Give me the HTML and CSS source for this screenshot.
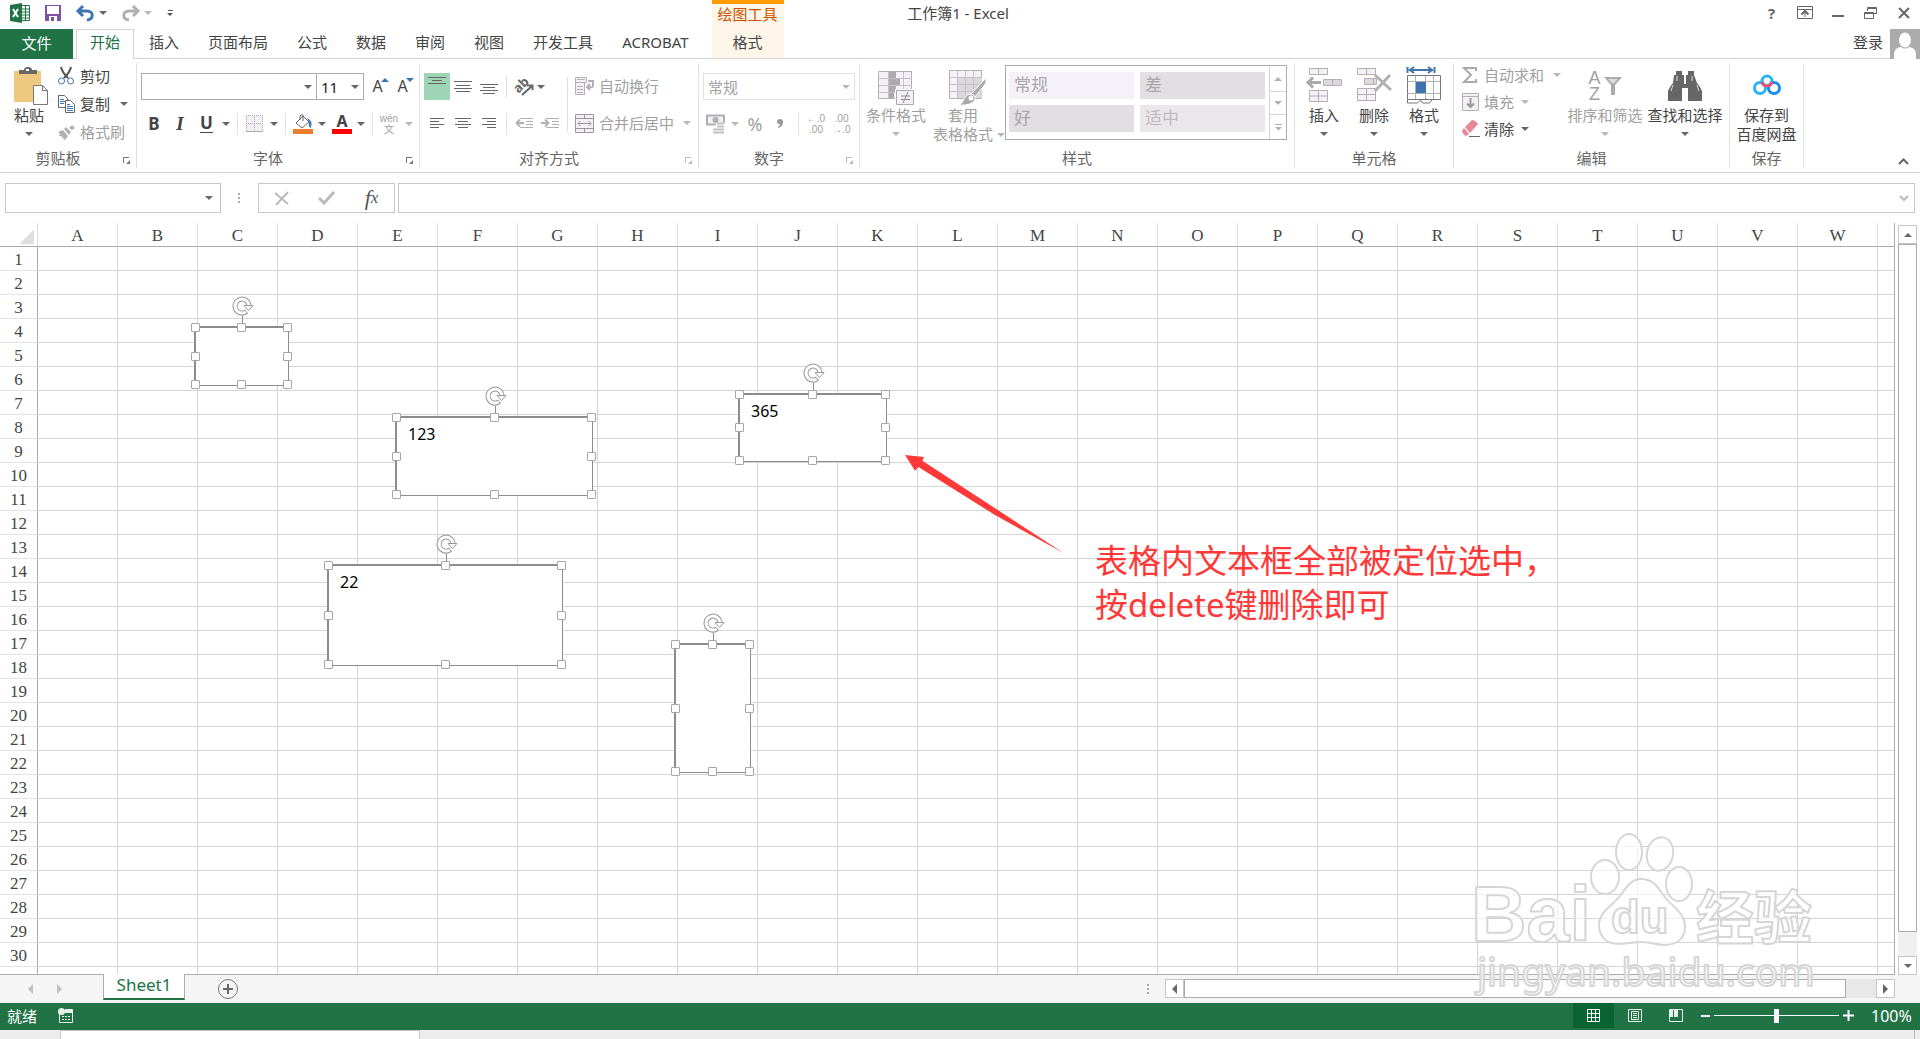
FILE: index.html
```html
<!DOCTYPE html>
<html lang="zh-CN">
<head>
  <meta charset="UTF-8" />
  <meta name="viewport" content="width=device-width, initial-scale=1.0" />
  <title>工作簿1 - Excel</title>
  <link rel="stylesheet" href="styles.css">
</head>
<body>
  <header class="header">
    <div class="quick">
      <svg class="logo" width="20" height="20" viewBox="0 0 20 20"><path d="M11 2.5h8.5v15H11" fill="#fff" stroke="#217346"/><path d="M12 6h7M12 9h7M12 12h7M12 15h7M15.5 3v14" stroke="#217346"/><path d="M0 2 12 0v20L0 18z" fill="#217346"/><path d="m3 6 5 8M8 6l-5 8" stroke="#fff" stroke-width="2"/></svg>
      <button class="qbtn" aria-label="保存"><svg width="16" height="16" viewBox="0 0 16 16"><path d="M0 0h16v16H0z" fill="#8150a0"/><path d="M2 1h12v8H2zM4 11h8v5H4z" fill="#fff"/><path d="M6 12h3v4H6z" fill="#8150a0"/></svg></button>
      <button class="qbtn undo" aria-label="撤消"><svg width="19" height="16" viewBox="0 0 19 16"><path d="M7 1 2 6l5 5M2 6h9c7 0 7 8 0 9" fill="none" stroke="#3e74b0" stroke-width="3"/></svg><i class="caret"></i></button>
      <button class="qbtn redo" aria-label="恢复"><svg width="19" height="16" viewBox="0 0 19 16"><path d="m12 1 5 5-5 5M17 6H8c-7 0-7 8 0 9" fill="none" stroke="#b1b1b1" stroke-width="3"/></svg><i class="caret off"></i></button>
      <button class="qbtn custom" aria-label="自定义快速访问工具栏"><svg width="7" height="7" viewBox="0 0 7 7"><path d="M1 0h5v1H1zM0 3h6L3 6z" fill="#555"/></svg></button>
    </div>
    <h1 class="doc-title">工作簿1 - Excel</h1>
    <div class="window-btns">
      <button aria-label="帮助"><b>?</b></button>
      <button aria-label="功能区显示选项"><svg width="16" height="14" viewBox="0 0 16 14" fill="none" stroke="#666"><path d="M.5.5h15v12H.5zM0 3.500h16M8 11V5"/><path d="M4.500 8.500 8 5l3.500 3.500" stroke-width="2"/></svg></button>
      <button aria-label="最小化"><svg width="12" height="14" viewBox="0 0 12 14"><path d="M0 9h12v2H0z" fill="#666"/></svg></button>
      <button aria-label="还原"><svg width="13" height="13" viewBox="0 0 13 13" fill="none" stroke="#666"><path d="M3.500 4V.5h9v6h-3M3.500 1.500h9"/><path d="M.5 5.500h9v6h-9zM.5 6.500h9"/></svg></button>
      <button aria-label="关闭"><svg width="12" height="12" viewBox="0 0 12 12"><path d="m1 1 10 10M11 1 1 11" stroke="#666" stroke-width="2"/></svg></button>
    </div>

    <nav class="tabs">
      <a class="tab file" href="#">文件</a>
      <a class="tab active" href="#">开始</a>
      <a class="tab" href="#">插入</a>
      <a class="tab" href="#">页面布局</a>
      <a class="tab" href="#">公式</a>
      <a class="tab" href="#">数据</a>
      <a class="tab" href="#">审阅</a>
      <a class="tab" href="#">视图</a>
      <a class="tab" href="#">开发工具</a>
      <a class="tab" href="#">ACROBAT</a>
    </nav>
    <div class="context">
      <span>绘图工具</span>
      <a href="#">格式</a>
    </div>
    <div class="account">
      <a href="#">登录</a>
      <svg width="30" height="30" viewBox="0 0 30 30"><path d="M0 0h30v30H0z" fill="#ababab"/><ellipse cx="15" cy="11" rx="6" ry="7.500" fill="#fff"/><path d="M4 30v-5q0-6 7-7 4 3 8 0 7 1 7 7v5z" fill="#fff"/></svg>
    </div>
  </header>

  <main class="ribbon">
    <!-- 剪贴板 -->
    <section class="group g-clip">
      <div class="body">
        <button class="big paste">
          <span class="pic"><svg width="36" height="38" viewBox="0 0 36 38"><path d="M1 4h27v31H1z" fill="#edc87e"/><path d="M6 7V3h5q0-3 4-3t4 3h5v4z" fill="#666"/><path d="M13 2h3v2h-3z" fill="#fff"/><path d="M20.500 18.500h9l5 5v14h-14z" fill="#fff" stroke="#777"/><path d="M29.500 18.500v5h5" fill="none" stroke="#777"/></svg></span>
          粘贴<i class="caret"></i>
        </button>
        <div class="stack">
          <button class="small"><span class="ico"><svg width="16" height="18" viewBox="0 0 16 18" fill="none"><path d="M3 0c1 5 4 8 7 11M13 0c-1 5-4 8-7 11" stroke="#555" stroke-width="2"/><circle cx="3.500" cy="14" r="3" stroke="#3e74b0"/><circle cx="12.500" cy="14" r="3" stroke="#3e74b0"/></svg></span>剪切</button>
          <button class="small"><span class="ico"><svg width="17" height="18" viewBox="0 0 17 18" fill="#fff" stroke="#666"><path d="M.5.500h6l3 3v9h-9z"/><path d="M2 4.500h4M2 6.500h5M2 8.500h4" stroke="#3e74b0"/><path d="M7.500 5.500h5l4 4v8h-9z"/><path d="M9 9.500h3M9 11.500h6M9 13.500h6M9 15.500h6" stroke="#3e74b0"/></svg></span>复制<i class="caret"></i></button>
          <button class="small" disabled><span class="ico"><svg width="17" height="15" viewBox="0 0 17 15" fill="#b1b1b1"><path d="m0 7 5-2 5 6-3 4-2-1 1-2-3 1 1-2-3 0 1-2zM6 4l2-2 5 5-2 3zM11 3l3-3 3 3-3 2z"/></svg></span>格式刷</button>
        </div>
      </div>
      <h2 class="label">剪贴板<button class="launch" aria-label="剪贴板设置"><svg width="7" height="7" viewBox="0 0 7 7"><path d="M0 6V0h6v1H1v5zM3 3l3 3M7 3v4H3z" fill="#777"/></svg></button></h2>
    </section>

    <!-- 字体 -->
    <section class="group g-font">
      <div class="body lines">
        <div class="line">
          <span class="combo font-name"><select aria-label="字体"><option></option></select><i class="caret"></i></span>
          <span class="combo font-size"><select aria-label="字号"><option>11</option></select><i class="caret"></i></span>
          <button class="tool size-btn" aria-label="增大字号"><span>A</span><i class="caret up blue"></i></button>
          <button class="tool size-btn" aria-label="减小字号"><span>A</span><i class="caret blue"></i></button>
        </div>
        <div class="line font-tools">
          <button class="tool"><b>B</b></button>
          <button class="tool"><b class="it">I</b></button>
          <button class="tool"><b class="un">U</b></button>
          <button class="tool" aria-label="下划线选项"><i class="caret"></i></button>
          <i class="sep"></i>
          <button class="tool" aria-label="边框" disabled><svg width="17" height="17" viewBox="0 0 17 17"><path d="M0 0h17v16H0z" fill="#f4eff6"/><path d="M0 .5h17M0 8.500h17M.5 0v16M8.500 0v16M16.500 0v16" stroke="#aaa" stroke-dasharray="1 1"/><path d="M0 16h17v1H0z" fill="#aaa"/></svg></button>
          <button class="tool" aria-label="边框选项"><i class="caret"></i></button>
          <i class="sep"></i>
          <button class="tool" aria-label="填充颜色"><svg width="20" height="20" viewBox="0 0 20 20"><path d="m3 9 7-7 6 6-7 6z" fill="#fff" stroke="#666"/><path d="M7 6V2q1-2 3-1v6" fill="none" stroke="#666"/><path d="M14 4q6 2 4 10-3-1-2-6z" fill="#3e74b0"/><path d="M0 15h20v5H0z" fill="#ed7d31"/></svg></button>
          <button class="tool" aria-label="填充颜色选项"><i class="caret"></i></button>
          <button class="tool" aria-label="字体颜色"><b class="font-color">A</b></button>
          <button class="tool" aria-label="字体颜色选项"><i class="caret"></i></button>
          <i class="sep"></i>
          <button class="tool wen" disabled><span>wén</span><span>文</span></button>
          <button class="tool" aria-label="拼音选项" disabled><i class="caret"></i></button>
        </div>
      </div>
      <h2 class="label">字体<button class="launch" aria-label="字体设置"><svg width="7" height="7" viewBox="0 0 7 7"><path d="M0 6V0h6v1H1v5zM3 3l3 3M7 3v4H3z" fill="#777"/></svg></button></h2>
    </section>

    <!-- 对齐方式 -->
    <section class="group g-align">
      <div class="body lines cols">
        <div class="align-grid">
          <button class="tool on" aria-label="顶端对齐"><svg width="18" height="17" viewBox="0 0 18 17"><path d="M0 .5h18M4 3.500h10M0 6.500h18" class="ln"/></svg></button>
          <button class="tool" aria-label="垂直居中"><svg width="18" height="12" viewBox="0 0 18 12"><path d="M0 .5h18M2 4.500h14M0 7.500h18M2 10.500h14" class="ln"/></svg></button>
          <button class="tool low" aria-label="底端对齐"><svg width="18" height="11" viewBox="0 0 18 11"><path d="M0 .5h18M3 3.500h12M0 6.500h18M3 9.500h12" class="ln"/></svg></button>
          <i class="sep"></i>
          <button class="tool" aria-label="方向"><svg width="19" height="18" viewBox="0 0 19 18"><text x="0" y="13" class="ab" transform="rotate(-45 5 10)">ab</text><path d="m7 17 10-9M12 7.500h5.500V12" fill="none" stroke="#666" stroke-width="2"/></svg></button>
          <button class="tool start" aria-label="方向选项"><i class="caret"></i></button>
          <button class="tool" aria-label="左对齐"><svg width="14" height="11" viewBox="0 0 14 11"><path d="M0 .5h14M0 3.500h9M0 6.500h14M0 9.500h9" class="ln"/></svg></button>
          <button class="tool" aria-label="居中"><svg width="16" height="11" viewBox="0 0 16 11"><path d="M0 .5h16M3 3.500h10M0 6.500h16M3 9.500h10" class="ln"/></svg></button>
          <button class="tool" aria-label="右对齐"><svg width="14" height="11" viewBox="0 0 14 11"><path d="M0 .5h14M5 3.500h9M0 6.500h14M5 9.500h9" class="ln"/></svg></button>
          <i class="sep"></i>
          <button class="tool" aria-label="减少缩进量" disabled><svg width="18" height="11" viewBox="0 0 18 11"><path d="M5 .5h13M11 3.500h7M11 6.500h7M5 9.500h13" stroke="#b1b1b1"/><path d="M1 5h8M5 1.500 1.500 5 5 8.500" fill="none" stroke="#b1b1b1" stroke-width="2"/></svg></button>
          <button class="tool" aria-label="增加缩进量" disabled><svg width="18" height="11" viewBox="0 0 18 11"><path d="M5 .5h13M11 3.500h7M11 6.500h7M5 9.500h13" stroke="#b1b1b1"/><path d="M0 5h8M4 1.500 7.500 5 4 8.500" fill="none" stroke="#b1b1b1" stroke-width="2"/></svg></button>
        </div>
        <i class="sep tall"></i>
        <div class="wrap-col">
          <button class="small" disabled><span class="ico"><svg width="19" height="18" viewBox="0 0 19 18" fill="#f4eff6" stroke="#b1b1b1"><path d="M.5.500h11v5H.5zM.5 5.500h9v12h-9zM2 2.500h8M2 9.500h6M2 12.500h6M2 15.500h6"/><path d="M13 4h5v5q0 2-6 1M15 7l-3 3 3 3" fill="none" stroke-width="2"/></svg></span>自动换行</button>
          <button class="small" disabled><span class="ico"><svg width="19" height="19" viewBox="0 0 19 19" fill="#f4eff6" stroke="#999"><path d="M.5.500h18v18H.5zM.5 4.500h18M.5 14.500h18M9.500 0v4.500M9.500 14.500v4"/><path d="M3 9.500h13M5.500 7 3 9.500 5.500 12M13.500 7 16 9.500 13.500 12" fill="none"/></svg></span>合并后居中<i class="caret"></i></button>
        </div>
      </div>
      <h2 class="label">对齐方式<button class="launch off" aria-label="对齐设置"><svg width="7" height="7" viewBox="0 0 7 7"><path d="M0 6V0h6v1H1v5zM3 3l3 3M7 3v4H3z" fill="#bbb"/></svg></button></h2>
    </section>

    <!-- 数字 -->
    <section class="group g-num">
      <div class="body lines">
        <div class="line">
          <span class="combo num-format"><select aria-label="数字格式" disabled><option>常规</option></select><i class="caret off"></i></span>
        </div>
        <div class="line num-tools">
          <button class="tool" aria-label="会计数字格式" disabled><svg width="20" height="20" viewBox="0 0 20 20"><path d="M1 1.500h17v9H1z" fill="#f4eff6" stroke="#b1b1b1" stroke-width="2"/><circle cx="9.500" cy="6" r="3" fill="#b1b1b1"/><path d="M10 9h9v10H6v-5h4z" fill="#fff"/><path d="M11 9.500h7M11 12.500h7M11 15.500h7M7 15.500h7M7 18.500h7M11 18.500h7" stroke="#c4bfc6" stroke-width="2"/></svg></button>
          <button class="tool" aria-label="会计格式选项" disabled><i class="caret"></i></button>
          <button class="tool pct" disabled>%</button>
          <button class="tool comma" aria-label="千位分隔样式" disabled><svg width="6" height="9" viewBox="0 0 6 9"><path d="M3 0q3 0 3 3 0 5-5 6V8q2-1 2-3-3 0-3-2.500T3 0z" fill="#999"/></svg></button>
          <i class="sep"></i>
          <button class="tool dec" disabled><span>←.0</span><span>.00</span></button>
          <button class="tool dec" disabled><span>.00</span><span>→.0</span></button>
        </div>
      </div>
      <h2 class="label">数字<button class="launch off" aria-label="数字设置"><svg width="7" height="7" viewBox="0 0 7 7"><path d="M0 6V0h6v1H1v5zM3 3l3 3M7 3v4H3z" fill="#bbb"/></svg></button></h2>
    </section>

    <!-- 样式 -->
    <section class="group g-style">
      <div class="body">
        <button class="big cond" disabled>
          <span class="pic"><svg width="38" height="36" viewBox="0 0 38 36"><path d="M1.500 1.500h33v27h-33z" fill="#f6f1f8" stroke="#b1b1b1"/><path d="M1 8.500h34M1 15.500h34M1 22.500h34M11.500 1v28M18.500 1v28M26.500 1v28" stroke="#c4c0c6"/><path d="M12 1h7v7h-7zM12 9h11v6H12zM12 16h7v6h-7zM12 23h5v6h-5z" fill="#ababab"/><path d="M18 19h20v17H18z" fill="#fff"/><path d="M19.500 20.500h17v14h-17z" fill="#f6f1f8" stroke="#aaa"/><path d="M24 26h9M24 29.500h9M31 22l-5 11" stroke="#888"/></svg></span>
          条件格式<i class="caret"></i>
        </button>
        <button class="big table-fmt" disabled>
          <span class="pic"><svg width="38" height="36" viewBox="0 0 38 36"><path d="M1.500.500h32v28h-32z" fill="#f6f1f8" stroke="#b1b1b1"/><path d="M10 8h24v20H10z" fill="#dcd8dc"/><path d="M1 7.500h33M1 14.500h33M1 21.500h33M9.500 0v28M17.500 0v28M25.500 0v28" stroke="#c4c0c6"/><path d="M38 8v5L27 27l-4-3z" fill="#aaa" stroke="#fff"/><path d="M22 24q6 0 5 6-4 6-16 5 4-2 5-6 2-5 6-5z" fill="#aaa" stroke="#fff"/><circle cx="23" cy="28" r="2.500" fill="#fff"/></svg></span>
          套用<br>表格格式<i class="caret"></i>
        </button>
        <div class="gallery">
          <div class="swatches">
            <button class="sw normal">常规</button>
            <button class="sw bad">差</button>
            <button class="sw good">好</button>
            <button class="sw mid">适中</button>
          </div>
          <div class="gal-scroll">
            <button aria-label="上一行"><i class="caret up"></i></button>
            <button aria-label="下一行"><i class="caret"></i></button>
            <button aria-label="其他"><svg width="7" height="7" viewBox="0 0 7 7"><path d="M0 0h7v1H0zM0 3h7L3.500 6.500z" fill="#b1b1b1"/></svg></button>
          </div>
        </div>
      </div>
      <h2 class="label">样式</h2>
    </section>

    <!-- 单元格 -->
    <section class="group g-cells">
      <div class="body">
        <button class="big w50"><span class="pic"><svg width="36" height="36" viewBox="0 0 36 36" fill="#f6f1f8" stroke="#b1b1b1"><path d="M3.500 1.500h18v6h-18zM12.500 1.500v6M3.500 23.500h18v11h-18zM3.500 29h18M12.500 23.500v11"/><path d="M17.500 12.500h18v6h-18zM26.500 12.500v6" fill="#dfd8df"/><path d="M1 15.500h14M7 10.500l-5 5 5 5" fill="none" stroke="#aaa" stroke-width="3"/></svg></span>插入<i class="caret"></i></button>
        <button class="big w50"><span class="pic"><svg width="36" height="36" viewBox="0 0 36 36" fill="#f6f1f8" stroke="#b1b1b1"><path d="M1.500 1.500h18v6h-18zM10.500 1.500v6M1.500 21.500h18v12h-18zM1.500 27.500h18M10.500 21.500v12"/><path d="M8.500 11.500h12v6h-12zM17.500 11.500v6" fill="#dfd8df"/><path d="m19 8 16 15M34 8 19 24" fill="none" stroke="#b1b1b1" stroke-width="3"/></svg></span>删除<i class="caret"></i></button>
        <button class="big w50"><span class="pic"><svg width="36" height="38" viewBox="0 0 36 38" fill="none"><path d="M1.500 0v6M28.500 0v6M3 3h24M8 0 4 3l4 3M22 0l4 3-4 3" stroke="#3e74b0" stroke-width="2"/><path d="M1.500 8.500h33v24h-33z" fill="#fff" stroke="#777"/><path d="M1 14.500h33M1 26.500h33M9.500 9v23M19.500 9v23M27.500 9v23" stroke="#b1b1b1"/><path d="M10 15h10v11H10z" fill="#3e74b0"/><path d="M1.500 32v4h10l3-3 2 3h7l3-4" stroke="#777"/></svg></span>格式<i class="caret"></i></button>
      </div>
      <h2 class="label">单元格</h2>
    </section>

    <!-- 编辑 -->
    <section class="group g-edit">
      <div class="body">
        <div class="stack edit-stack">
          <button class="small" disabled><span class="ico"><svg width="16" height="16" viewBox="0 0 16 16"><path d="M14 4V1H2l7 7-7 7h12v-3" fill="none" stroke="#aaa" stroke-width="2"/></svg></span>自动求和<i class="caret far"></i></button>
          <button class="small" disabled><span class="ico"><svg width="17" height="18" viewBox="0 0 17 18"><path d="M.5.500h16v17H.5zM.5 3.500h16" fill="#f4eff6" stroke="#b1b1b1"/><path d="M8.500 5v9M5 10.500l3.500 3.500 3.500-3.500" fill="none" stroke="#999" stroke-width="2"/></svg></span>填充<i class="caret"></i></button>
          <button class="small"><span class="ico"><svg width="18" height="18" viewBox="0 0 18 18"><path d="M10 0q3 0 6 4L8 13 3 7z" fill="#e6879a"/><path d="m2 8 5 6-3 2q-3-1-4-5z" fill="#e6879a"/><path d="M7 16.500h11" stroke="#666"/></svg></span>清除<i class="caret"></i></button>
        </div>
        <button class="big w80" disabled><span class="pic"><span class="az"><span>A</span><span>Z</span></span><svg width="18" height="18" viewBox="0 0 18 18"><path d="M0 0h18l-7 8v10H7V8z" fill="#aaa"/><path d="M4 2h10L9 7z" fill="#ddd"/></svg></span>排序和筛选<i class="caret"></i></button>
        <button class="big w80"><span class="pic"><svg width="34" height="32" viewBox="0 0 34 32" fill="#666"><path d="M8 1h6v4h2v9h2V5h2V1h6v4l3 8 3 4 2 4v10H20V18h-6v13H0V21l2-4 3-4 1-8h2z"/><path d="M9 6v5M24 6v5M5 15l-2 6M29 15l2 6" stroke="#ddd"/></svg></span>查找和选择<i class="caret"></i></button>
      </div>
      <h2 class="label">编辑</h2>
    </section>

    <!-- 保存 -->
    <section class="group g-save">
      <div class="body">
        <button class="big w73"><span class="pic"><svg width="28" height="22" viewBox="0 0 28 22" fill="none" stroke-width="3"><circle cx="14" cy="7" r="5" stroke="#27b4f5"/><circle cx="7" cy="14" r="5.500" stroke="#27b4f5"/><circle cx="21" cy="14" r="5.500" stroke="#168cf0"/><path d="M9 8q1 4 5 4t5-4" stroke="#f4506a"/></svg></span>保存到<br>百度网盘</button>
      </div>
      <h2 class="label">保存</h2>
    </section>
    <button class="collapse" aria-label="折叠功能区"><svg width="11" height="7" viewBox="0 0 11 7"><path d="m1 6 4.500-4.500L10 6" fill="none" stroke="#666" stroke-width="2"/></svg></button>
  </main>

  <div class="formula-bar">
    <span class="combo name-box"><input type="text" aria-label="名称框"><i class="caret"></i></span>
    <i class="dots"></i>
    <div class="fx-btns">
      <button aria-label="取消"><svg width="16" height="13" viewBox="0 0 16 13"><path d="m1 1 13 11M14 0 2 13" stroke="#bbb" stroke-width="2"/></svg></button>
      <button aria-label="输入"><svg width="17" height="14" viewBox="0 0 17 14"><path d="m1 7 5 5L16 1" fill="none" stroke="#bbb" stroke-width="3"/></svg></button>
      <button class="fx" aria-label="插入函数">f<sub>x</sub></button>
    </div>
    <div class="formula"><input type="text" aria-label="编辑栏"><svg width="10" height="7" viewBox="0 0 10 7"><path d="m1 1 4 4 4-4" fill="none" stroke="#bbb" stroke-width="2"/></svg></div>
  </div>

  <div class="work">
    <div class="sheet" id="sheet">
      <table class="grid" id="grid"></table>
      <svg class="arrow" width="160" height="100" viewBox="0 0 160 100"><path d="m0 0 19 2-1.600 3.700L158.500 98 90 60 13.400 12 10 15.700z" fill="#ff3838"/></svg>
      <p class="note">表格内文本框全部被定位选中，<br>按delete键删除即可</p>
    </div>
    <div class="vscroll">
      <button aria-label="向上滚动"><i class="caret up"></i></button>
      <div class="thumb"></div>
      <button aria-label="向下滚动"><i class="caret"></i></button>
    </div>
  </div>

  <div class="sheet-bar">
    <button class="nav" aria-label="上一个工作表"><svg width="6" height="10" viewBox="0 0 6 10"><path d="M5 0v10L0 5z" fill="#c0c0c0"/></svg></button>
    <button class="nav" aria-label="下一个工作表"><svg width="6" height="10" viewBox="0 0 6 10"><path d="M0 0v10l5-5z" fill="#c0c0c0"/></svg></button>
    <a class="sheet-tab" href="#">Sheet1</a>
    <button class="add" aria-label="新工作表"><svg width="20" height="20" viewBox="0 0 20 20"><circle cx="10" cy="10" r="9.500" fill="none" stroke="#777"/><path d="M10 5v10M5 10h10" stroke="#666" stroke-width="2"/></svg></button>
    <i class="dots"></i>
    <div class="hscroll">
      <button aria-label="向左滚动"><svg width="6" height="10" viewBox="0 0 6 10"><path d="M5 0v10L0 5z" fill="#666"/></svg></button>
      <div class="thumb"></div>
      <button aria-label="向右滚动"><svg width="6" height="10" viewBox="0 0 6 10"><path d="M0 0v10l5-5z" fill="#666"/></svg></button>
    </div>
  </div>

  <footer class="status">
    <span>就绪</span>
    <svg class="macro" width="15" height="15" viewBox="0 0 15 15"><path d="M1.500 5.500v9h13v-13H7" fill="none" stroke="#e6f2ea"/><path d="M7 1h7v4H7z" fill="#e6f2ea"/><circle cx="3.500" cy="3.500" r="3.500" fill="#e6f2ea"/><path d="M4 8.500h9M4 11.500h9" stroke="#e6f2ea" stroke-dasharray="2 1"/></svg>
    <div class="views">
      <button class="on" aria-label="普通"><svg width="13" height="13" viewBox="0 0 13 13"><path d="M.5.500h12v12H.5zM.5 4.500h12M.5 8.500h12M4.500 0v13M8.500 0v13" fill="none" stroke="#fff"/></svg></button>
      <button aria-label="页面布局"><svg width="14" height="13" viewBox="0 0 14 13"><path d="M.5.500h13v12H.5zM3.500 2.500h7v8h-7zM5 4.500h4M5 6.500h4M5 8.500h4" fill="none" stroke="#e6f2ea"/></svg></button>
      <button aria-label="分页预览"><svg width="14" height="13" viewBox="0 0 14 13"><path d="M.5.500h13v12H.5z" fill="none" stroke="#e6f2ea"/><path d="M1 1h3v7H1zM5 1h4v7H5z" fill="#e6f2ea"/></svg></button>
    </div>
    <button class="zoom-btn" aria-label="缩小"><svg width="9" height="11" viewBox="0 0 9 11"><path d="M0 5h9v2H0z" fill="#fff"/></svg></button>
    <input class="zoom" type="range" min="0" max="200" value="100" aria-label="缩放">
    <button class="zoom-btn plus" aria-label="放大"><svg width="11" height="11" viewBox="0 0 11 11"><path d="M0 4.500h11v2H0zM4.500 0h2v11h-2z" fill="#fff"/></svg></button>
    <span class="percent">100%</span>
  </footer>
  <div class="taskbar"><div class="search"></div><i class="peek"></i></div>

  <svg class="watermark" width="360" height="174" viewBox="0 0 360 174">
    <g class="wm-shape">
      <text x="6" y="111" class="wm-bai">Bai</text>
      <ellipse cx="140" cy="47" rx="14" ry="17"/>
      <ellipse cx="164" cy="22" rx="13" ry="18"/>
      <ellipse cx="195" cy="24" rx="13" ry="17" transform="rotate(12 195 24)"/>
      <ellipse cx="214" cy="54" rx="13" ry="17"/>
      <path d="M176 49c12 0 17 8 23 17 7 10 21 16 21 31 0 11-8 18-20 18-9 0-15-3-24-3s-14 2-23 2c-12 0-19-8-19-19 0-13 14-20 21-29 6-8 11-17 21-17z"/>
      <text x="146" y="103" class="wm-du">du</text>
      <text x="231" y="109" class="wm-jy">经验</text>
      <text x="12" y="156" class="wm-url">jingyan.baidu.com</text>
    </g>
  </svg>

  <script src="script.js"></script>
</body>
</html>
```
FILE: styles.css
```css
* {
  box-sizing: border-box;
}

body {
  margin: 0;
  min-height: 100vh;
  display: flex;
  flex-direction: column;
  position: relative;
  overflow: hidden;
  background: #fff;
  color: #444;
  font: 15px/20px "Noto Sans", "Noto Sans CJK SC", sans-serif;
}

button, input, select, textarea {
  font: inherit;
  color: inherit;
  background: none;
  border: 0;
  padding: 0;
  margin: 0;
  border-radius: 0;
  outline: 0;
}

a {
  color: inherit;
  text-decoration: none;
}

svg {
  display: block;
  flex: none;
  overflow: visible;
}

button:disabled {
  color: #a0a0a0;
}

.caret {
  flex: none;
  width: 0;
  height: 0;
  border: solid transparent;
  border-width: 4px 4px 0;
  border-top-color: #666;
}

.caret.up {
  border-width: 0 4px 4px;
  border-bottom-color: #666;
}

.caret.off,
button:disabled .caret {
  border-top-color: #b8b8b8;
}

/* title bar and tabs */
.header {
  display: grid;
  grid-template-columns: auto auto 1fr;
  grid-template-rows: 29px 30px;
  border-bottom: 1px solid #d4d4d4;
  height: 59px;
}

.quick {
  grid-area: 1 / 1;
  display: flex;
  align-items: center;
  padding: 0 0 3px 10px;
}

.qbtn {
  display: flex;
  align-items: center;
  gap: 4px;
  margin-left: 15px;
}

.qbtn.redo {
  margin-left: 14px;
}

.doc-title {
  grid-area: 1 / 1 / 2 / -1;
  margin: 0;
  padding-right: 4px;
  font-size: 15px;
  font-weight: normal;
  line-height: 26px;
  text-align: center;
  pointer-events: none;
}

.window-btns {
  grid-area: 1 / 3;
  justify-self: end;
  display: flex;
}

.window-btns button {
  width: 33px;
  height: 26px;
  display: flex;
  align-items: center;
  justify-content: center;
  color: #666;
}

.tabs {
  grid-area: 2 / 1;
  display: flex;
  gap: 1px;
}

.tab {
  padding: 0 14px;
  line-height: 26px;
}

.tab.file {
  width: 73px;
  margin-right: 2px;
  background: #217346;
  color: #fff;
  line-height: 28px;
  text-align: center;
}

.tab.active {
  padding: 0 13px;
  height: 30px;
  border: 1px solid #d4d4d4;
  border-bottom: 0;
  background: #fff;
  color: #217346;
  line-height: 24px;
}

.context {
  grid-area: 1 / 2 / 3 / 3;
  display: flex;
  flex-direction: column;
  width: 72px;
  height: 58px;
  margin-left: 9px;
  border-top: 4px solid #ff9c00;
  background: #fff6ea;
  text-align: center;
}

.context span {
  color: #cc5200;
  line-height: 20px;
}

.context a {
  margin-top: 5px;
  line-height: 26px;
}

.account {
  grid-area: 2 / 3;
  justify-self: end;
  display: flex;
  gap: 7px;
  line-height: 26px;
}

/* ribbon */
.ribbon {
  display: flex;
  height: 114px;
  padding: 4px 0;
  border-bottom: 1px solid #d4d4d4;
}

.group {
  flex: none;
  display: flex;
  flex-direction: column;
  border-right: 1px solid #e1e1e1;
}

.g-clip { width: 137px; }
.g-font { width: 283px; }
.g-align { width: 279px; }
.g-num { width: 161px; }
.g-style { width: 435px; }
.g-cells { width: 159px; }
.g-edit { width: 276px; }
.g-save { width: 74px; }

.body {
  display: flex;
  align-items: flex-start;
  height: 87px;
}

.body.lines {
  flex-direction: column;
  align-items: stretch;
  gap: 10px;
  padding: 10px 4px 0;
}

.body.cols {
  flex-direction: row;
  align-items: flex-start;
  gap: 0;
}

.line {
  display: flex;
  align-items: center;
  height: 27px;
}

.label {
  position: relative;
  margin: 0;
  color: #666;
  font-size: 15px;
  font-weight: normal;
  line-height: 20px;
  text-align: center;
}

.g-clip .label,
.g-align .label,
.g-num .label,
.g-font .label {
  padding-right: 20px;
}

.launch {
  position: absolute;
  right: 6px;
  top: 9px;
}

.big {
  display: block;
  padding: 4px 0 0;
  line-height: 19px;
  text-align: center;
  white-space: nowrap;
}

.pic {
  display: flex;
  justify-content: center;
  height: 39px;
}

.big > .caret {
  display: block;
  margin: 7px auto 0;
}

.big.paste {
  width: 58px;
}

.paste .pic {
  padding-left: 4px;
}

.big.cond {
  width: 72px;
}

.big.cond .pic,
.big.table-fmt .pic {
  padding-top: 3px;
}

.big.table-fmt {
  width: 62px;
}

.table-fmt .pic {
  padding-left: 8px;
}

.big.table-fmt > .caret {
  display: inline-block;
  margin: 0 -12px 3px 4px;
}

.w50 { width: 50px; }
.w73 { width: 73px; }
.w80 { width: 80px; }

.g-cells .body {
  padding-left: 4px;
}

.w80 .pic {
  padding-top: 3px;
}

.w73 .pic {
  padding-top: 7px;
}

.stack {
  display: flex;
  flex-direction: column;
}

.small {
  display: flex;
  align-items: center;
  height: 28px;
  padding-bottom: 2px;
  white-space: nowrap;
}

.ico {
  width: 22px;
}

.small .caret {
  margin-left: 7px;
}

.g-clip .small .caret {
  margin-left: 10px;
}

.edit-stack {
  padding-left: 8px;
  width: 111px;
}

.edit-stack .small {
  height: 27px;
  padding-bottom: 4px;
}

.small .caret.far {
  margin-left: 9px;
}

.tool {
  display: flex;
  align-items: center;
  justify-content: center;
  height: 27px;
}

.tool b {
  font-size: 17px;
}

.tool b.it {
  font: italic bold 19px/20px "Liberation Serif", serif;
}

.un {
  border-bottom: 1px solid #444;
  line-height: 18px;
}

.tool b.font-color {
  width: 20px;
  border-bottom: 5px solid red;
  font-size: 16px;
  line-height: 16px;
  text-align: center;
}

.tool.on {
  background: #9fd5b7;
  align-items: flex-start;
  padding-top: 4px;
}

.tool.low {
  padding-top: 6px;
}

.tool.start {
  justify-content: flex-start;
}

.sep {
  justify-self: center;
  width: 1px;
  height: 22px;
  background: #e1e1e1;
}

.sep.tall {
  height: 55px;
  margin: 4px 7px 0 4px;
}

.ln {
  stroke: #666;
}

.ab {
  font-size: 13px;
  font-weight: bold;
  fill: #666;
}

.az {
  display: flex;
  flex-direction: column;
  font: 18px/16px "Liberation Sans", sans-serif;
}

.az + svg {
  margin: 7px 0 0 3px;
}

.combo {
  display: flex;
  align-items: center;
  height: 27px;
  border: 1px solid #ababab;
  padding-right: 4px;
}

.combo select,
.combo input {
  flex: 1;
  min-width: 0;
  height: 25px;
  padding-left: 4px;
  appearance: none;
}

.combo select:disabled {
  color: #a0a0a0;
  opacity: 1;
}

.font-name {
  width: 176px;
}

.font-size {
  width: 47px;
  border-left: 0;
  color: #222;
}

.num-format {
  flex: 1;
  border-color: #e1e1e1;
}

.size-btn {
  width: 25px;
  padding-left: 8px;
  align-items: flex-start;
  font-size: 16px;
  line-height: 27px;
}

.size-btn .caret {
  margin: 5px 0 0 -2px;
}

.caret.blue {
  border-top-color: #3e74b0;
  border-bottom-color: #3e74b0;
}

.font-tools {
  display: grid;
  grid-template-columns: 26px 26px 27px 12px 11px 23px 15px 9px 26px 12px 28px 10px 13px 20px 20px;
}

.num-tools {
  display: grid;
  grid-template-columns: 25px 14px 26px 24px 12px 24px 27px;
}

.align-grid {
  display: grid;
  grid-template-columns: 26px 26px 26px 9px 26px 26px;
  grid-template-rows: 27px 27px;
  row-gap: 10px;
  align-items: center;
}

.wrap-col {
  display: flex;
  flex-direction: column;
  gap: 9px;
}

.wrap-col .ico {
  width: 24px;
}

.wrap-col .caret {
  margin-left: 9px;
}

.wen,
.dec {
  flex-direction: column;
  font: 10px/11px "Liberation Sans", "Noto Sans CJK SC", sans-serif;
}

.pct {
  font-size: 18px;
}

.gallery {
  display: flex;
  width: 282px;
  height: 75px;
  margin: 2px 0 0 11px;
  border: 1px solid #ababab;
}

.swatches {
  flex: 1;
  display: grid;
  grid-template-columns: 1fr 1fr;
  gap: 6px;
  padding: 6px 4px 7px 3px;
}

.sw {
  padding: 0 0 2px 5px;
  background: #e3dee2;
  color: #a8a8a8;
  font-size: 17px;
  text-align: left;
}

.sw.normal {
  background: #f6f1f8;
}

.sw.mid {
  background: #ebe6ec;
  color: #bbb;
}

.gal-scroll {
  display: grid;
  grid-template-rows: 26px 23px 24px;
  width: 17px;
  border-left: 1px solid #d4d4d4;
}

.gal-scroll button {
  display: flex;
  align-items: center;
  justify-content: center;
  border-bottom: 1px solid #d4d4d4;
}

.gal-scroll button:last-child {
  border-bottom: 0;
}

.gal-scroll .caret {
  border-top-color: #b1b1b1;
}

.gal-scroll .caret.up {
  border-bottom-color: #b1b1b1;
}

.collapse {
  align-self: flex-end;
  margin: 0 11px 3px auto;
}

/* formula bar */
.formula-bar {
  display: flex;
  height: 50px;
  padding: 10px 5px;
}

.name-box {
  width: 216px;
  height: 30px;
  border-color: #c6c6c6;
  padding-right: 7px;
}

.dots {
  width: 2px;
  height: 10px;
  margin: 10px 18px 0 17px;
  background: repeating-linear-gradient(#aaa 0 2px, transparent 2px 4px);
}

.fx-btns {
  display: flex;
  width: 137px;
  height: 30px;
  margin-right: 3px;
  border: 1px solid #c6c6c6;
}

.fx-btns button {
  flex: 1;
  display: flex;
  align-items: center;
  justify-content: center;
}

.fx-btns .fx {
  color: #555;
  font: italic 22px/26px "Liberation Serif", serif;
}

.fx sub {
  font-size: 17px;
  vertical-align: baseline;
}

.formula {
  flex: 1;
  display: flex;
  align-items: center;
  height: 30px;
  border: 1px solid #c6c6c6;
  padding-right: 5px;
}

.formula input {
  flex: 1;
  height: 28px;
  padding: 0 4px;
}

/* worksheet */
.work {
  flex: 1;
  display: flex;
}

.sheet {
  flex: 1;
  position: relative;
  display: flex;
  border-right: 1px solid #ababab;
  border-bottom: 1px solid #ababab;
}

.grid {
  width: 100%;
  table-layout: fixed;
  border-collapse: separate;
  border-spacing: 0;
}

.grid th,
.grid td {
  height: 24px;
  padding: 0;
  border-right: 1px solid #d4d4d4;
  border-bottom: 1px solid #d4d4d4;
}

.grid th {
  padding-top: 2px;
  font: 17px/20px "Liberation Serif", "Noto Sans CJK SC", serif;
}

.grid thead th {
  width: 80px;
  border-right-color: #dedede;
  border-bottom-color: #ababab;
}

.grid tbody th {
  border-right-color: #ababab;
  border-bottom-color: #e4e4e4;
}

.grid th:first-child {
  width: 38px;
}

.grid thead th:last-child {
  width: auto;
}

.grid thead th:last-child,
.grid td:last-child {
  border-right: 0;
}

.grid tr.rest th,
.grid tr.rest td {
  height: auto;
  border-bottom: 0;
}

.corner {
  display: block;
  width: 15px;
  height: 15px;
  margin: 1px 0 0 19px;
  background: linear-gradient(135deg, transparent 50%, #dfdfdf 50%);
}

.box {
  position: absolute;
  background: #fff;
  border: 1px solid #8c8c8c;
  border-top-width: 2px;
  border-left-width: 2px;
}

.box textarea {
  display: block;
  width: 100%;
  height: 100%;
  padding: 5px 0 0 11px;
  resize: none;
  overflow: hidden;
  color: #000;
  font-size: 16px;
  line-height: 22px;
}

.box::before {
  content: "";
  position: absolute;
  left: 50%;
  top: -12px;
  width: 1px;
  height: 12px;
  background: #8c8c8c;
}

.box .rotate {
  position: absolute;
  left: 50%;
  top: -32px;
  margin-left: -10px;
}

.handle {
  position: absolute;
  width: 9px;
  height: 9px;
  margin: -5px 0 0 -5px;
  border: 1px solid #a6a6a6;
  border-radius: 1px;
  background: #fff;
}

.arrow {
  position: absolute;
  left: 905px;
  top: 232px;
}

.note {
  position: absolute;
  left: 1095px;
  top: 316px;
  margin: 0;
  color: #ff3838;
  font-size: 33px;
  line-height: 44px;
  white-space: nowrap;
}

.vscroll {
  flex: none;
  display: flex;
  flex-direction: column;
  width: 25px;
  padding: 2px 3px 0;
}

.vscroll button,
.hscroll button {
  flex: none;
  display: flex;
  align-items: center;
  justify-content: center;
  width: 19px;
  height: 19px;
  border: 1px solid #c6c6c6;
  background: #fff;
}

.thumb {
  flex: 1;
  border: 1px solid #ababab;
  background: #fff;
}

.vscroll .thumb {
  width: 19px;
  margin-bottom: 24px;
  box-shadow: 0 24px #f0f0f0;
}

/* sheet tabs */
.sheet-bar {
  display: flex;
  align-items: flex-start;
  height: 28px;
  background: #f5f5f5;
}

.nav {
  height: 28px;
  margin-left: 28px;
}

.nav + .nav {
  margin-left: 23px;
}

.sheet-tab {
  z-index: 1;
  width: 82px;
  height: 26px;
  margin: -1px 0 0 40px;
  border: 1px solid #ababab;
  border-width: 0 1px 2px;
  border-bottom-color: #217346;
  background: #fff;
  color: #217346;
  font-size: 17px;
  line-height: 22px;
  text-align: center;
}

.add {
  margin: 4px 0 0 33px;
}

.sheet-bar .dots {
  margin: 9px 16px 0 auto;
}

.hscroll {
  flex: 0 0 38%;
  display: flex;
  height: 19px;
  margin: 4px 25px 0 0;
}

.hscroll .thumb {
  margin-right: 30px;
  box-shadow: 30px 0 #e8e8e8;
}

/* status bar */
.status {
  display: flex;
  align-items: center;
  height: 27px;
  padding: 0 9px 2px 7px;
  background: #217346;
  color: #fff;
}

.macro {
  margin-left: 21px;
}

.views {
  display: flex;
  margin-left: auto;
}

.views button {
  display: flex;
  align-items: center;
  justify-content: center;
  width: 41px;
  height: 25px;
}

.views .on {
  background: #0a6332;
}

.zoom-btn {
  margin-left: 5px;
}

.zoom {
  width: 125px;
  height: 14px;
  margin-left: 4px;
  appearance: none;
  background: linear-gradient(#fff, #fff) center / 100% 1px no-repeat;
}

.zoom::-webkit-slider-thumb {
  appearance: none;
  width: 5px;
  height: 14px;
  background: #fff;
}

.zoom-btn.plus {
  margin-left: 4px;
}

.percent {
  width: 40px;
  margin-left: 17px;
  font-size: 16px;
}

.taskbar {
  display: flex;
  justify-content: space-between;
  height: 9px;
  padding: 0 5px 0 60px;
  background: #ededed;
}

.search {
  width: 360px;
  border: 1px solid #c6c6c6;
  border-bottom: 0;
  background: #fff;
}

.peek {
  width: 1px;
  background: #bbb;
}

.watermark {
  position: absolute;
  right: 95px;
  bottom: 35px;
  z-index: 2;
  pointer-events: none;
}

.wm-shape {
  fill: #fff;
  fill-opacity: 0.7;
  stroke: #d6d6d6;
  stroke-width: 2px;
  stroke-linejoin: round;
}

.wm-bai {
  font: bold 77px "Liberation Sans", sans-serif;
}

.wm-du {
  font: bold 47px "Liberation Sans", sans-serif;
}

.wm-jy {
  font: bold 58px "Noto Sans CJK SC", sans-serif;
}

.wm-url {
  font: 39px "Noto Sans", sans-serif;
}
```
FILE: script.js
```js
var letters = 'ABCDEFGHIJKLMNOPQRSTUVW'.split('');
var rows = 30;

// column headings, plus one part column at the right edge
var html = '<thead><tr><th><i class="corner"></i></th>';
letters.forEach(function (l) { html += '<th>' + l + '</th>'; });
html += '<th></th></tr></thead><tbody>';

var cells = '';
for (var c = 0; c <= letters.length; c++) cells += '<td></td>';
for (var r = 1; r <= rows; r++) html += '<tr><th>' + r + '</th>' + cells + '</tr>';
html += '<tr class="rest"><th></th>' + cells + '</tr></tbody>';
document.getElementById('grid').innerHTML = html;

// text boxes drawn on the sheet
var boxes = [
  { x: 194, y: 103, w: 95, h: 60, text: '' },
  { x: 395, y: 193, w: 198, h: 80, text: '123' },
  { x: 327, y: 341, w: 236, h: 102, text: '22' },
  { x: 738, y: 170, w: 149, h: 69, text: '365' },
  { x: 674, y: 420, w: 77, h: 130, text: '' }
];

var rotate = '<svg class="rotate" width="22" height="20" viewBox="0 0 22 20" fill="none">' +
  '<path d="M14.500 15.500A7 7 0 1 1 17 10" stroke="#999" stroke-width="5"/>' +
  '<path d="M13.800 16A7 7 0 1 1 17 11" stroke="#fff" stroke-width="3"/>' +
  '<path d="M12 9.500h9l-4.500 5z" fill="#fff" stroke="#999"/></svg>';

boxes.forEach(function (b, i) {
  var el = document.createElement('div');
  el.className = 'box';
  el.style.left = b.x + 'px';
  el.style.top = b.y + 'px';
  el.style.width = b.w + 'px';
  el.style.height = b.h + 'px';
  var inner = '<textarea aria-label="文本框 ' + (i + 1) + '">' + b.text + '</textarea>' + rotate;
  [0, 50, 100].forEach(function (x) {
    [0, 50, 100].forEach(function (y) {
      if (x === 50 && y === 50) return;
      inner += '<span class="handle" style="left:' + x + '%;top:' + y + '%"></span>';
    });
  });
  el.innerHTML = inner;
  document.getElementById('sheet').appendChild(el);
});
```
